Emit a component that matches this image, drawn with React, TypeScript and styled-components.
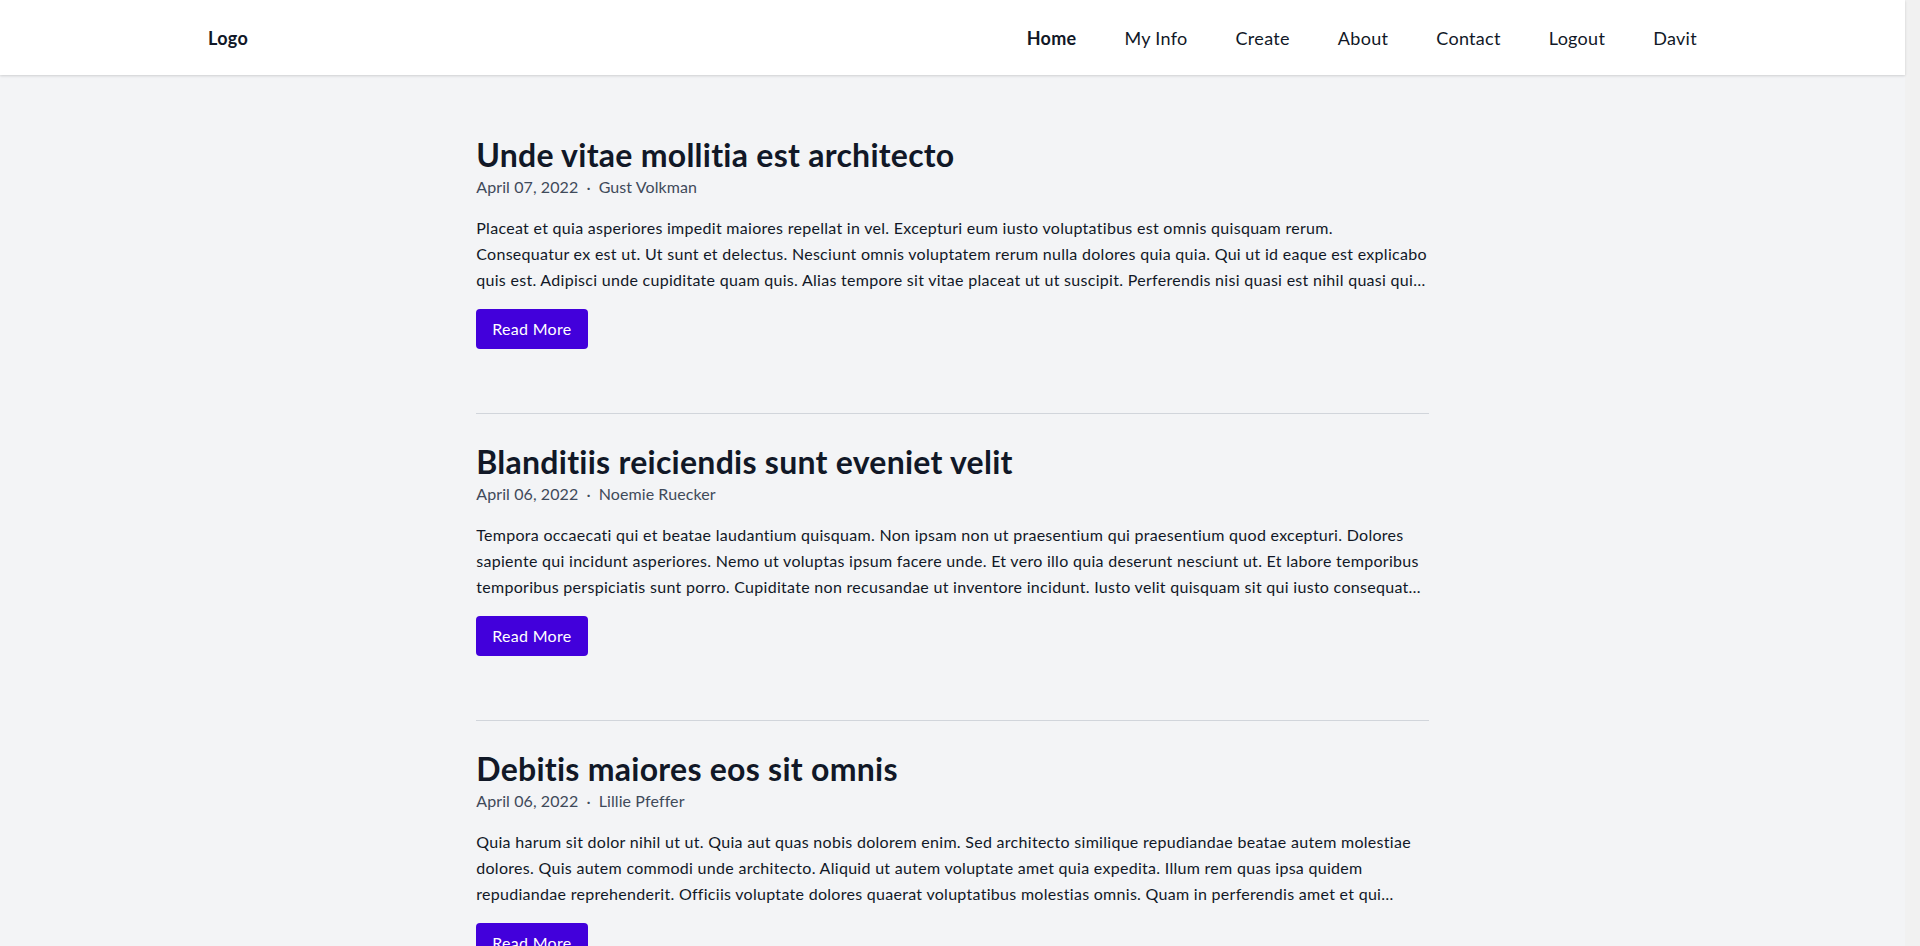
import React from "react";
import styled, { createGlobalStyle } from "styled-components";

const GlobalStyle = createGlobalStyle`
  html, body { margin: 0; padding: 0; }
  * { box-sizing: border-box; }
  html {
    background: #f1f1f1;
  }
  body {
    background: #f1f1f1;
    font-family: Lato, "Open Sans", sans-serif;
    color: #111827;
    letter-spacing: 0.3px;
  }
  #root {
    width: calc(100% - 15px);
    min-height: 100vh;
    background: #f3f4f6;
  }
`;

const Header = styled.header`
  position: relative;
  background: #ffffff;
  box-shadow: 0 1px 3px rgba(0, 0, 0, 0.1), 0 1px 2px rgba(0, 0, 0, 0.06);
`;

const HeaderInner = styled.div`
  max-width: 1489px;
  height: 75px;
  margin: 0 auto;
  display: flex;
  align-items: center;
  justify-content: space-between;
`;

const Logo = styled.a`
  font-size: 18px;
  font-weight: 700;
  color: #111827;
  text-decoration: none;
`;

const Nav = styled.nav`
  display: flex;
  align-items: center;
  gap: 48px;
`;

const NavLink = styled.a<{ $active?: boolean }>`
  font-size: 18px;
  font-weight: ${(p) => (p.$active ? 700 : 400)};
  color: #111827;
  text-decoration: none;
`;

const Main = styled.main`
  width: 50%;
  margin: 0 auto;
  padding-top: 32px;
`;

const Article = styled.article`
  padding: 28px 0 64px;
  border-bottom: 1px solid #d1d5db;
`;

const Title = styled.h2`
  margin: 0;
  font-size: 32px;
  line-height: 40px;
  font-weight: 700;
  letter-spacing: 0.26px;
  color: #111827;
`;

const Meta = styled.div`
  display: flex;
  align-items: center;
  font-size: 16px;
  line-height: 24px;
  letter-spacing: 0.1px;
  color: #3f4a5a;
`;

const Dot = styled.span`
  margin: 0 8px;
`;

const Excerpt = styled.p`
  margin: 16px 0 0;
  font-size: 16px;
  line-height: 26px;
  letter-spacing: 0.29px;
  color: #111827;
  white-space: pre-line;
  display: -webkit-box;
  -webkit-line-clamp: 3;
  -webkit-box-orient: vertical;
  overflow: hidden;
`;

const ReadMore = styled.button`
  display: block;
  margin-top: 16px;
  height: 40px;
  padding: 0 16px;
  border: none;
  border-radius: 4px;
  background: #4200db;
  color: #ffffff;
  font-family: inherit;
  font-size: 16px;
  letter-spacing: 0.3px;
  line-height: 40px;
  cursor: pointer;
`;

type Post = { title: string; date: string; author: string; body: string };

const posts: Post[] = [
  {
    title: "Unde vitae mollitia est architecto",
    date: "April 07, 2022",
    author: "Gust Volkman",
    body:
      "Placeat et quia asperiores impedit maiores repellat in vel. Excepturi eum iusto voluptatibus est omnis quisquam rerum.\nConsequatur ex est ut. Ut sunt et delectus. Nesciunt omnis voluptatem rerum nulla dolores quia quia. Qui ut id eaque est explicabo quis est. Adipisci unde cupiditate quam quis. Alias tempore sit vitae placeat ut ut suscipit. Perferendis nisi quasi est nihil quasi quia ut. Dolorem et ut qui officiis.",
  },
  {
    title: "Blanditiis reiciendis sunt eveniet velit",
    date: "April 06, 2022",
    author: "Noemie Ruecker",
    body:
      "Tempora occaecati qui et beatae laudantium quisquam. Non ipsam non ut praesentium qui praesentium quod excepturi. Dolores sapiente qui incidunt asperiores. Nemo ut voluptas ipsum facere unde. Et vero illo quia deserunt nesciunt ut. Et labore temporibus temporibus perspiciatis sunt porro. Cupiditate non recusandae ut inventore incidunt. Iusto velit quisquam sit qui iusto consequatur. Ab et dolorem veritatis.",
  },
  {
    title: "Debitis maiores eos sit omnis",
    date: "April 06, 2022",
    author: "Lillie Pfeffer",
    body:
      "Quia harum sit dolor nihil ut ut. Quia aut quas nobis dolorem enim. Sed architecto similique repudiandae beatae autem molestiae dolores. Quis autem commodi unde architecto. Aliquid ut autem voluptate amet quia expedita. Illum rem quas ipsa quidem repudiandae reprehenderit. Officiis voluptate dolores quaerat voluptatibus molestias omnis. Quam in perferendis amet et qui veritatis quia. Eos sed ut et.",
  },
  {
    title: "Voluptatem aut ipsam quia",
    date: "April 05, 2022",
    author: "Jaden Kuhic",
    body:
      "Aut quos ut in eveniet. Voluptas sit dolorem et non sapiente est. Magnam et ut harum dolores. Natus ut quo sint nostrum qui eligendi. Eveniet sunt voluptatem nisi quo. Sint odit totam laboriosam et consequatur. Omnis praesentium accusamus fugiat quis quae. Iure corrupti et voluptatem laborum natus.",
  },
  {
    title: "Et quia odio sequi dolorum",
    date: "April 05, 2022",
    author: "Reina Gleason",
    body:
      "Nisi magni qui aut quia. Ipsum sapiente in ut rerum. Eos voluptas rerum et consectetur ut. Enim quidem omnis sint eos. Similique eos est accusantium maxime aut. Rerum dolorum inventore rerum distinctio. Ut officia rem sed et quaerat dolor. Molestiae tempore dolorem quis nihil quas.",
  },
  {
    title: "Rerum necessitatibus est quo",
    date: "April 04, 2022",
    author: "Marcel Hodkiewicz",
    body:
      "Odit cum amet voluptatem qui. Velit sit vel ut. Distinctio eius esse veniam autem. Delectus quibusdam corrupti velit omnis est. Sunt id ut ad quaerat. Qui et sed et vero aut quam. Dolores voluptas quia ut explicabo. Aut sit nihil aut natus maxime voluptas facere.",
  },
  {
    title: "Sapiente molestiae quos corporis",
    date: "April 03, 2022",
    author: "Ona Runolfsdottir",
    body:
      "Quibusdam occaecati sed nihil laudantium. Cumque non esse aut velit. Est est dolores dolorum vero. Et eum qui vel dolorem excepturi cupiditate. Reprehenderit in architecto nisi. Quia qui et molestias nulla. Fuga ut et ea voluptatem officia. Corporis et quasi et dolorum id.",
  },
  {
    title: "Nobis ut ea nulla nisi",
    date: "April 02, 2022",
    author: "Elmer Rau",
    body:
      "Harum sed reiciendis aut doloremque. Ipsa error rerum voluptas consequatur est. Aperiam quidem assumenda temporibus. Iste sed ea accusamus minima. Numquam aut voluptas qui ab quis. Tenetur est magnam rerum veniam. Ut eius ut in voluptas. Nam ut labore qui omnis minus.",
  },
  {
    title: "Doloremque iusto itaque ut",
    date: "April 01, 2022",
    author: "Kailey Heathcote",
    body:
      "Qui praesentium nostrum nam eos et. Velit nisi est aliquid tempore. Non qui dolore voluptatem in. Officia sed sed sint excepturi. Ut ab animi quos dignissimos nam. Eaque dolorum et ut qui vitae. Id sint consequatur et est. Itaque deleniti sed et ea ut voluptatem error.",
  },
  {
    title: "Tempore facere adipisci quae",
    date: "March 31, 2022",
    author: "Dorian Murazik",
    body:
      "Incidunt molestias ipsam ut perferendis. Fugit est accusantium nihil. Voluptates veritatis ut est et quia. Minus error eum illo aperiam. Voluptatum aut quisquam iure qui. In consequatur quo et sit. Aut repellendus non animi voluptas. Minima ut rem fugiat dolores omnis.",
  },
  {
    title: "Est eius sint deleniti",
    date: "March 30, 2022",
    author: "Tressa Wiza",
    body:
      "Vel et consequatur quia. Dolorem et aliquid odio aut. Enim nesciunt ut magnam earum. Consectetur soluta in dolor omnis. Ut aut eveniet nihil maiores. Ad est id ducimus sed dolores. Animi ea at et eaque. Quod aut ullam et fugit natus ut modi quia.",
  },
  {
    title: "Accusamus qui recusandae magni",
    date: "March 29, 2022",
    author: "Bruce Ankunding",
    body:
      "Corrupti asperiores et nam. Voluptas sunt aut sint quam eligendi. Velit inventore qui quaerat. Saepe ratione quia quae non. Et culpa nobis officiis labore. Aut id quia quae non veniam. Molestias aut ut id quos. Quis sed nemo velit dolorem perspiciatis sunt.",
  },
  {
    title: "Ipsa voluptas ut consequuntur",
    date: "March 28, 2022",
    author: "Mabel Schamberger",
    body:
      "Eligendi ut rerum ab. Quae sit placeat sequi aut. Facilis odio et qui. Repudiandae beatae est vitae et. Culpa dolores rerum vel accusantium. Nam quidem eos sunt nihil. Consequatur eum ducimus in voluptatem. Deserunt et omnis id cumque autem molestiae eum ut.",
  },
  {
    title: "Fugiat nam laborum aperiam",
    date: "March 27, 2022",
    author: "Zane Bergnaum",
    body:
      "Ratione aliquam sed excepturi. Non similique sunt cum voluptate. Nesciunt et et odio. Omnis in dolores ut. Asperiores qui quia dicta tenetur. Sunt voluptatem sed ut et. Modi magnam est minus. Sit ut laborum veniam quo illum sint voluptas eligendi sed.",
  },
  {
    title: "Quos explicabo et eum",
    date: "March 26, 2022",
    author: "Hollie Kemmer",
    body:
      "Autem ea sunt nemo. Temporibus quasi facere sint. Molestias pariatur aut ut. Aut iste quo quidem. Laudantium rerum nostrum tempore. Earum quisquam est non. Dolorum est voluptas in. Quia dolorum sit nulla sequi eum sint aut quis consequatur.",
  },
  {
    title: "Cumque corporis nihil vel",
    date: "March 25, 2022",
    author: "Cyril Okuneva",
    body:
      "Non eum ut porro. Voluptate at recusandae in. Et omnis quasi ut. Dolor voluptas at ut. Numquam illum id qui. Ipsam earum aliquam et. Saepe culpa qui ut. Et debitis autem quo sunt dolorem quod omnis in voluptatum.",
  },
  {
    title: "Minima dolorem sed aut",
    date: "March 24, 2022",
    author: "Alva Kertzmann",
    body:
      "Rem pariatur quia iusto. Ut assumenda est quos. Dolor et nam ea. Ullam velit ex voluptatem. Voluptatibus aut non est. Esse ut et amet. Quis delectus voluptas officia. Adipisci dolorum at qui explicabo ut et distinctio ipsum.",
  },
  {
    title: "Hic eaque deserunt totam",
    date: "March 23, 2022",
    author: "Lenny Schaden",
    body:
      "Sint magnam et rerum. Ex eligendi omnis soluta. Qui quia animi tempora. Et voluptatem nisi non. Cum tempore ea porro. Natus rerum omnis et. Optio totam ut nihil. Esse nihil voluptatem quia accusamus et quos.",
  },
  {
    title: "Labore officiis saepe vitae",
    date: "March 22, 2022",
    author: "Ayla Lakin",
    body:
      "Ad quo veritatis quis. Corporis in sit ipsa. Est laborum nam aut. Et non quas quia. Architecto et eius voluptatum. Harum in et velit. Dicta beatae ab illo. Ut eos officiis dolore quibusdam vel sit quo.",
  },
  {
    title: "Perspiciatis et iure in",
    date: "March 21, 2022",
    author: "Omer Stroman",
    body:
      "Ea sed cum ut. Et quod est sed. Eum et qui omnis. Ut et est nisi. Quis ex placeat eius. Rerum fuga id ab. Ut vero quidem est. Molestiae et beatae nesciunt nam quas ipsum quia.",
  },
];

const navItems = ["Home", "My Info", "Create", "About", "Contact", "Logout", "Davit"];

export default function App() {
  return (
    <>
      <GlobalStyle />
      <Header>
        <HeaderInner>
          <Logo href="#">Logo</Logo>
          <Nav>
            {navItems.map((item, i) => (
              <NavLink key={item} href="#" $active={i === 0}>
                {item}
              </NavLink>
            ))}
          </Nav>
        </HeaderInner>
      </Header>
      <Main>
        {posts.map((post) => (
          <Article key={post.title}>
            <Title>{post.title}</Title>
            <Meta>
              <span>{post.date}</span>
              <Dot>·</Dot>
              <span>{post.author}</span>
            </Meta>
            <Excerpt>{post.body}</Excerpt>
            <ReadMore type="button">Read More</ReadMore>
          </Article>
        ))}
      </Main>
    </>
  );
}
